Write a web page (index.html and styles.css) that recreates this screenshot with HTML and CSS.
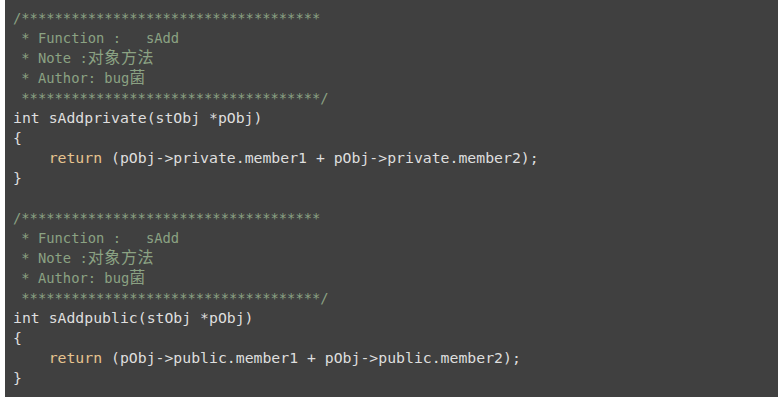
FILE: index.html
```html
<!DOCTYPE html>
<html>
<head>
<meta charset="utf-8">
<link rel="stylesheet" href="styles.css">
</head>
<body>
<div class="code">
<div class="ln cm">/************************************</div>
<div class="ln cm"> * Function :   sAdd</div>
<div class="ln cm"> * Note :<span class="cjk">对象方法</span></div>
<div class="ln cm"> * Author: bug<span class="cjk">菌</span></div>
<div class="ln cm"> ************************************/</div>
<div class="ln">int sAddprivate(stObj *pObj)</div>
<div class="ln">{</div>
<div class="ln">    <span class="kw">return</span> (pObj-&gt;private.member1 + pObj-&gt;private.member2);</div>
<div class="ln">}</div>
<div class="ln"> </div>
<div class="ln cm">/************************************</div>
<div class="ln cm"> * Function :   sAdd</div>
<div class="ln cm"> * Note :<span class="cjk">对象方法</span></div>
<div class="ln cm"> * Author: bug<span class="cjk">菌</span></div>
<div class="ln cm"> ************************************/</div>
<div class="ln">int sAddpublic(stObj *pObj)</div>
<div class="ln">{</div>
<div class="ln">    <span class="kw">return</span> (pObj-&gt;public.member1 + pObj-&gt;public.member2);</div>
<div class="ln">}</div>
</div>
</body>
</html>
```
FILE: styles.css
```css
html, body {
  margin: 0;
  padding: 0;
  background: #ffffff;
}
body {
  padding: 0 5px 0 5px;
}
.code {
  background: #404040;
  padding: 8px 8px 9px 8px;
  width: 773px;
  box-sizing: border-box;
  color: #dedede;
  font-family: "DejaVu Sans Mono", "Noto Sans CJK SC", monospace;
  font-size: 14.8px;
}
.ln {
  height: 20px;
  line-height: 20px;
  white-space: pre;
}
.cm {
  color: #8ba283;
  font-size: 13.8px;
}
.cjk {
  font-family: "Noto Sans CJK SC", sans-serif;
  font-size: 16px;
  line-height: 1;
  letter-spacing: 0.6px;
}
.kw {
  color: #e6c38f;
}
```
